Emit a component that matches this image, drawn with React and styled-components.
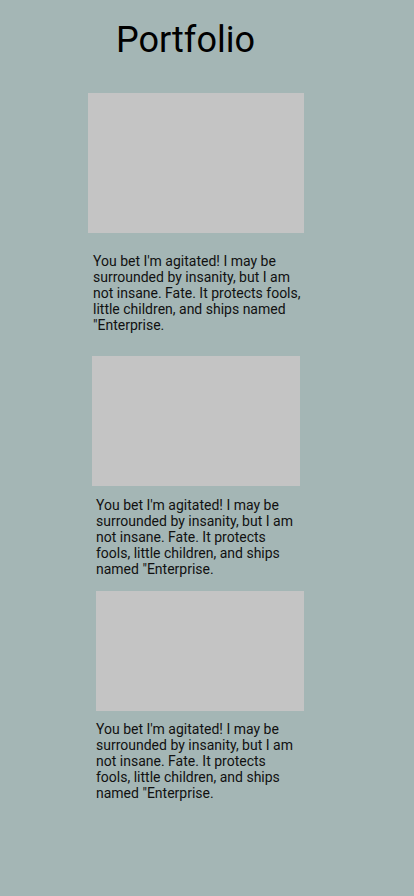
import React from "react";
import styled, { createGlobalStyle } from "styled-components";

const GlobalStyle = createGlobalStyle`
  html, body {
    margin: 0;
    padding: 0;
    background-color: #a4b6b5;
  }
  body {
    font-family: Roboto, "Liberation Sans", sans-serif;
    color: #111111;
  }
`;

const StyledPage = styled.div`
  width: 414px;
  min-height: 896px;
  background-color: #a4b6b5;
  display: flex;
  flex-direction: column;
`;

const Title = styled.h1`
  margin: 19px 0 0 116px;
  font-size: 36px;
  font-weight: 400;
  line-height: 42px;
  color: #000000;
`;

const StyledWork = styled.div`
  display: flex;
  flex-direction: column;
  margin-top: ${(props) => props.$top}px;

  .thumb {
    margin-left: ${(props) => props.$left}px;
    width: ${(props) => props.$width}px;
    height: ${(props) => props.$height}px;
    background-color: #c4c4c4;
  }
  .caption {
    margin: ${(props) => props.$gap}px 0 0 ${(props) => props.$textLeft}px;
    width: ${(props) => props.$textWidth}px;
    font-size: 14px;
    line-height: 16px;
  }
`;

const works = [
  { top: 32, left: 88, width: 216, height: 140, gap: 20, textLeft: 93, textWidth: 212 },
  { top: 23, left: 92, width: 208, height: 130, gap: 11, textLeft: 96, textWidth: 200 },
  { top: 14, left: 96, width: 208, height: 120, gap: 10, textLeft: 96, textWidth: 200 },
];

const text =
  "You bet I'm agitated! I may be surrounded by insanity, but I am not insane. Fate. It protects fools, little children, and ships named \"Enterprise.";

const Work = ({ top, left, width, height, gap, textLeft, textWidth }) => (
  <StyledWork
    $top={top}
    $left={left}
    $width={width}
    $height={height}
    $gap={gap}
    $textLeft={textLeft}
    $textWidth={textWidth}
  >
    <div className="thumb" />
    <p className="caption">{text}</p>
  </StyledWork>
);

const App = () => {
  return (
    <>
      <GlobalStyle />
      <StyledPage>
        <Title>Portfolio</Title>
        {works.map((work, index) => (
          <Work key={index} {...work} />
        ))}
      </StyledPage>
    </>
  );
};

export default App;
